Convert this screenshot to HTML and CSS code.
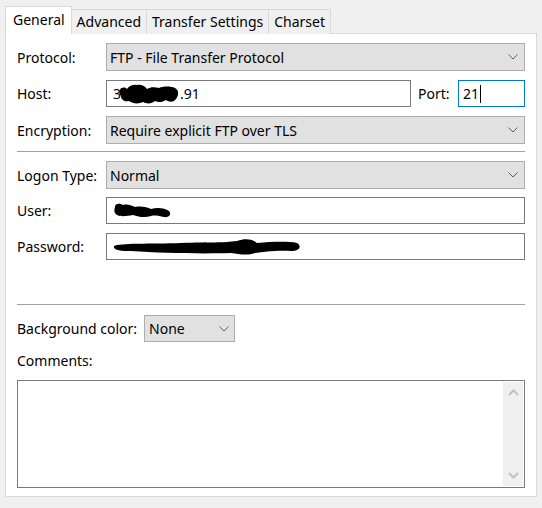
FILE: index.html
```html
<!DOCTYPE html>
<html>
<head>
<meta charset="utf-8">
<link rel="stylesheet" href="styles.css">
</head>
<body>
<div class="dialog">
  <div class="tabs">
    <div class="tab active">General</div>
    <div class="tab">Advanced</div>
    <div class="tab">Transfer Settings</div>
    <div class="tab">Charset</div>
  </div>
  <div class="panel">
    <div class="row r-protocol">
      <div class="label">Protocol:</div>
      <div class="select grow"><span>FTP - File Transfer Protocol</span><svg class="chev" viewBox="0 0 10 6" width="10" height="6"><path d="M0.5 0.5 L5 5 L9.5 0.5" fill="none" stroke="#606060" stroke-width="1"/></svg></div>
    </div>
    <div class="row r-host">
      <div class="label">Host:</div>
      <div class="input host"><span>3</span><svg class="scribble hostblob" width="62" height="22" viewBox="0 0 62 22"><path d="M1 7 C2 4, 6 4, 8 6 C10 3, 14 1, 18 2 C22 1, 26 3, 28 6 C31 4, 36 4, 40 5 C44 3, 52 3, 56 5 C60 7, 60 12, 57 16 C54 20, 50 19, 47 17 C44 19, 40 20, 36 18 C33 21, 27 21, 24 19 C20 21, 14 21, 10 18 C6 19, 2 17, 2 13 C0 11, 0 9, 1 7 Z" fill="#000"/></svg><span>.91</span></div>
      <div class="label port-label">Port:</div>
      <div class="input port"><span>21</span><span class="caret"></span></div>
    </div>
    <div class="row r-enc">
      <div class="label">Encryption:</div>
      <div class="select grow"><span>Require explicit FTP over TLS</span><svg class="chev" viewBox="0 0 10 6" width="10" height="6"><path d="M0.5 0.5 L5 5 L9.5 0.5" fill="none" stroke="#606060" stroke-width="1"/></svg></div>
    </div>
    <div class="sep s1"></div>
    <div class="row r-logon">
      <div class="label">Logon Type:</div>
      <div class="select grow"><span>Normal</span><svg class="chev" viewBox="0 0 10 6" width="10" height="6"><path d="M0.5 0.5 L5 5 L9.5 0.5" fill="none" stroke="#606060" stroke-width="1"/></svg></div>
    </div>
    <div class="row r-user">
      <div class="label">User:</div>
      <div class="input grow"><svg class="scribble" width="62" height="18" viewBox="0 0 62 18"><path d="M4 5 C4 1, 9 1, 12 3 C16 2, 20 3, 24 5 C30 4, 36 5, 40 7 C46 5, 54 6, 58 9 C61 12, 58 16, 53 15 C48 14, 44 13, 40 14 C34 16, 28 15, 22 13 C16 14, 10 15, 6 13 C3 11, 3 8, 4 5 Z" fill="#000"/></svg></div>
    </div>
    <div class="row r-pass">
      <div class="label">Password:</div>
      <div class="input grow"><svg class="scribble" width="192" height="22" viewBox="0 0 192 22"><path d="M3 10 C8 7, 40 8, 70 7 C100 6, 112 7, 126 5 C134 2, 142 3, 146 7 C160 6, 176 5, 186 7 C191 10, 189 15, 180 15 C166 14, 152 16, 144 17 C136 20, 128 18, 120 17 C90 18, 50 17, 20 15 C10 15, 2 14, 3 10 Z" fill="#000"/></svg></div>
    </div>
    <div class="sep s2"></div>
    <div class="row r-bg">
      <div class="label bg-label">Background color:</div>
      <div class="select small"><span>None</span><svg class="chev" viewBox="0 0 10 6" width="10" height="6"><path d="M0.5 0.5 L5 5 L9.5 0.5" fill="none" stroke="#606060" stroke-width="1"/></svg></div>
    </div>
    <div class="comments-label">Comments:</div>
    <div class="textarea">
      <div class="scrollbar">
        <svg width="11" height="7" viewBox="0 0 11 7"><path d="M1 6 L5.5 1.5 L10 6" fill="none" stroke="#c2c2c2" stroke-width="2"/></svg>
        <svg width="11" height="7" viewBox="0 0 11 7"><path d="M1 1 L5.5 5.5 L10 1" fill="none" stroke="#c2c2c2" stroke-width="2"/></svg>
      </div>
    </div>
  </div>
</div>
</body>
</html>
```
FILE: styles.css
```css
* { box-sizing: border-box; }
html, body { margin: 0; padding: 0; }
body {
  background: #f0f0f0;
  width: 542px;
  height: 508px;
  font-family: "Noto Sans", "Open Sans", sans-serif;
  font-size: 14px;
  color: #000;
}
.dialog {
  padding: 6px 5px 0 5px;
}
.tabs {
  display: flex;
  align-items: flex-end;
  height: 28px;
  position: relative;
  z-index: 1;
  margin-bottom: -1px;
}
.tab {
  height: 25px;
  padding: 0 5px;
  border: 1px solid #d9d9d9;
  border-left: none;
  border-bottom: none;
  background: #f0f0f0;
  line-height: 24px;
  white-space: nowrap;
}
.tab.active {
  height: 28px;
  background: #fff;
  border-left: 1px solid #d9d9d9;
  padding: 0 6px 0 7px;
  line-height: 26px;
}
.panel {
  background: #fff;
  border: 1px solid #d9d9d9;
  width: 532px;
  height: 464px;
  padding: 9px 11px 0 11px;
}
.row {
  display: flex;
  align-items: center;
}
.label {
  width: 89px;
  flex: none;
  white-space: nowrap;
}
.grow { flex: 1; }
.select {
  height: 28px;
  background: #e1e1e1;
  border: 1px solid #adadad;
  display: flex;
  align-items: center;
  padding-left: 3px;
}
.select span { flex: 1; }
.select .chev { margin-right: 6px; }
.input {
  height: 27px;
  background: #fff;
  border: 1px solid #7a7a7a;
  display: flex;
  align-items: center;
  padding-left: 4px;
}
.r-protocol { margin-bottom: 9px; }
.r-host { margin-bottom: 9px; }
.host { width: 305px; flex: none; padding-left: 6px; }
.hostblob { margin-left: -2px; margin-right: -1px; }
.port-label { width: auto; margin-left: 7px; flex: 1; }
.port { width: 67px; flex: none; border-color: #0078d7; padding-left: 4px; }
.caret { display: inline-block; width: 1px; height: 18px; background: #000; margin-left: 1px; }
.sep { height: 1px; background: #a0a0a0; }
.s1 { margin-top: 7px; margin-bottom: 9px; }
.s2 { margin-top: 44px; margin-bottom: 10px; }
.r-logon { margin-bottom: 8px; }
.r-user { margin-bottom: 9px; }
.scribble { display: block; }
.bg-label { width: auto; margin-right: 7px; }
.select.small { width: 91px; height: 27px; padding-left: 4px; }
.select.small .chev { margin-right: 5px; }
.comments-label { margin-top: 9px; height: 19px; line-height: 19px; }
.textarea {
  margin-top: 10px;
  height: 108px;
  border: 1px solid #7a7a7a;
  display: flex;
  justify-content: flex-end;
  padding: 1px;
}
.scrollbar {
  width: 20px;
  background: #f0f0f0;
  display: flex;
  flex-direction: column;
  justify-content: space-between;
  align-items: center;
  padding: 7px 0 7px 0;
}
.scrollbar svg { display: block; }
```
